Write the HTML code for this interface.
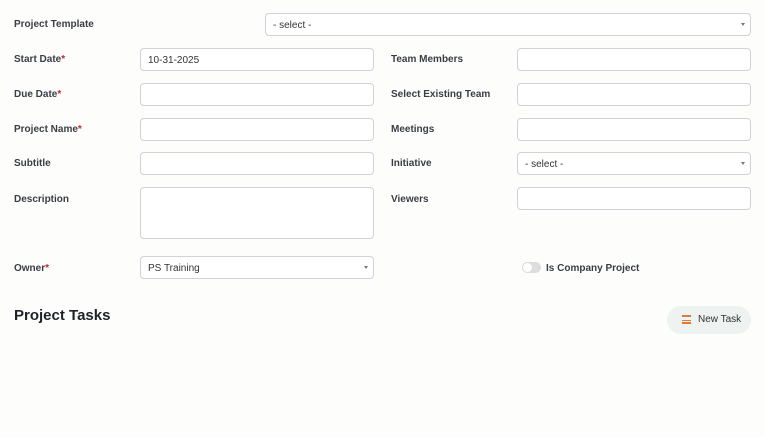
<!DOCTYPE html>
<html><head><style>
body{margin:0;width:765px;height:437px;background:#fdfdfb;font-family:"Liberation Sans",sans-serif;position:relative;overflow:hidden}
.l{position:absolute;font-size:10px;font-weight:bold;color:#3a3d45}
.l b{color:#c0262d}
.i{position:absolute;box-sizing:border-box;border:1px solid #cfd2d6;border-radius:4px;background:#fff;height:23px;font-size:10px;color:#333;padding:6px 7px}
.s::after{content:"";position:absolute;right:5px;top:9px;border:2.5px solid transparent;border-top:3px solid #777}
</style></head><body>
<div class="l" style="left:14px;top:19px">Project Template</div>
<div class="i s" style="left:265px;top:13px;width:486px">- select -</div>
<div class="l" style="left:14px;top:54px">Start Date<b>*</b></div>
<div class="i" style="left:140px;top:48px;width:234px">10-31-2025</div>
<div class="l" style="left:14px;top:89px">Due Date<b>*</b></div>
<div class="i" style="left:140px;top:83px;width:234px"></div>
<div class="l" style="left:14px;top:124px">Project Name<b>*</b></div>
<div class="i" style="left:140px;top:118px;width:234px"></div>
<div class="l" style="left:14px;top:158px">Subtitle</div>
<div class="i" style="left:140px;top:152px;width:234px"></div>
<div class="l" style="left:14px;top:194px">Description</div>
<div class="i" style="left:140px;top:187px;width:234px;height:52px"></div>
<div class="l" style="left:14px;top:263px">Owner<b>*</b></div>
<div class="i s" style="left:140px;top:256px;width:234px">PS Training</div>
<div class="l" style="left:391px;top:54px">Team Members</div>
<div class="i" style="left:517px;top:48px;width:234px"></div>
<div class="l" style="left:391px;top:89px">Select Existing Team</div>
<div class="i" style="left:517px;top:83px;width:234px"></div>
<div class="l" style="left:391px;top:124px">Meetings</div>
<div class="i" style="left:517px;top:118px;width:234px"></div>
<div class="l" style="left:391px;top:158px">Initiative</div>
<div class="i s" style="left:517px;top:152px;width:234px">- select -</div>
<div class="l" style="left:391px;top:194px">Viewers</div>
<div class="i" style="left:517px;top:187px;width:234px"></div>
<div style="position:absolute;left:522px;top:262px;width:19px;height:11px;border-radius:6px;background:#ddd"><div style="position:absolute;left:1px;top:1px;width:9px;height:9px;border-radius:50%;background:#fff"></div></div>
<div class="l" style="left:546px;top:263px">Is Company Project</div>
<div style="position:absolute;left:14px;top:307px;font-size:15px;font-weight:bold;color:#1f2229">Project Tasks</div>
<div style="position:absolute;left:667px;top:306px;width:84px;height:28px;border-radius:14px;background:#eef2f1;font-size:10px;color:#333;line-height:26px">
<span style="position:absolute;left:15px;top:9px;width:9px;height:9px;border-top:2px solid #e07a36;border-bottom:2px solid #e07a36;box-sizing:border-box"><span style="position:absolute;left:0;top:2.5px;width:9px;height:1.5px;background:#e07a36"></span></span>
<span style="position:absolute;left:31px;top:1px">New Task</span></div>
</body></html>
